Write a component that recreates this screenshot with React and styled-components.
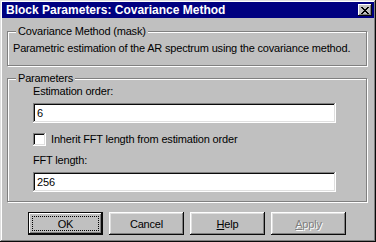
import styled, { createGlobalStyle } from "styled-components";

const GlobalStyle = createGlobalStyle`
  html, body {
    margin: 0;
    padding: 0;
    background: #c0c0c0;
  }
  body {
    font-family: "Liberation Sans", Arial, sans-serif;
    font-size: 11px;
    letter-spacing: -0.18px;
    color: #000;
  }
`;

const Window = styled.div`
  width: 376px;
  height: 242px;
  box-sizing: border-box;
  padding: 2px;
  background: #c0c0c0;
  display: flex;
  flex-direction: column;
  box-shadow: inset -1px -1px #0a0a0a, inset 1px 1px #dfdfdf,
    inset -2px -2px #808080, inset 2px 2px #fff;
`;

const TitleBar = styled.div`
  height: 16px;
  background: #000080;
  color: #fff;
  display: flex;
  align-items: center;
  justify-content: space-between;
  padding: 0 2px 0 4px;
`;

const Title = styled.span`
  font-weight: bold;
  font-size: 12px;
  letter-spacing: 0;
`;

const CloseButton = styled.button`
  width: 14px;
  height: 12px;
  padding: 0;
  border: 0;
  background: #c0c0c0;
  display: flex;
  align-items: center;
  justify-content: center;
  box-shadow: inset -1px -1px #0a0a0a, inset 1px 1px #fff,
    inset -2px -2px #808080;
`;

const Body = styled.div`
  flex: 1;
  padding: 7px 7px 0 5px;
  display: flex;
  flex-direction: column;
`;

const GroupBox = styled.fieldset`
  margin: 0 0 ${(p) => p.$gap || 0}px;
  padding: 0;
  border: 1px solid #808080;
  box-shadow: inset 1px 1px #fff, 1px 1px #fff;
  min-width: 0;
`;

const Legend = styled.legend`
  margin-left: 8px;
  padding: 0 2px;
  line-height: 13px;
  background: #c0c0c0;
`;

const GroupContent = styled.div`
  display: flex;
  flex-direction: column;
  padding: ${(p) => p.$pad};
`;

const Text = styled.div`
  line-height: 13px;
  white-space: nowrap;
`;

const Field = styled.div`
  width: 303px;
  height: 20px;
  box-sizing: border-box;
  margin: 5px 0 0;
  padding: 3px 4px;
  background: #fff;
  line-height: 14px;
  box-shadow: inset -1px -1px #fff, inset 1px 1px #808080,
    inset -2px -2px #dfdfdf, inset 2px 2px #0a0a0a;
`;

const CheckRow = styled.label`
  display: flex;
  align-items: center;
  gap: 5px;
  margin: 10px 0 8px;
  line-height: 13px;
`;

const CheckBox = styled.span`
  width: 13px;
  height: 13px;
  background: #fff;
  box-shadow: inset -1px -1px #fff, inset 1px 1px #808080,
    inset -2px -2px #dfdfdf, inset 2px 2px #0a0a0a;
`;

const ButtonRow = styled.div`
  display: flex;
  gap: 6px;
  margin-top: 10px;
  padding-left: 21px;
`;

const Button = styled.button`
  width: 75px;
  height: 23px;
  padding: 4px;
  border: 0;
  background: #c0c0c0;
  font-family: inherit;
  font-size: 11px;
  letter-spacing: inherit;
  color: ${(p) => (p.disabled ? "#808080" : "#000")};
  text-shadow: ${(p) => (p.disabled ? "1px 1px 0 #fff" : "none")};
  display: flex;
  box-shadow: ${(p) =>
    p.$default
      ? "inset -1px -1px #0a0a0a, inset 1px 1px #0a0a0a, inset -2px -2px #0a0a0a, inset 2px 2px #fff, inset -3px -3px #808080"
      : "inset -1px -1px #0a0a0a, inset 1px 1px #fff, inset -2px -2px #808080, inset 2px 2px #dfdfdf"};
`;

const ButtonLabel = styled.span`
  flex: 1;
  display: flex;
  align-items: center;
  justify-content: center;
  border: 1px dotted ${(p) => (p.$focused ? "#000" : "transparent")};
  u {
    text-decoration: underline;
  }
`;

function CloseGlyph() {
  const rows = [
    [0, 1, 6, 7],
    [1, 2, 5, 6],
    [2, 3, 4, 5],
    [3, 4],
    [2, 3, 4, 5],
    [1, 2, 5, 6],
    [0, 1, 6, 7],
  ];
  return (
    <svg width="8" height="7" viewBox="0 0 8 7" shapeRendering="crispEdges">
      {rows.map((cols, y) =>
        cols.map((x) => <rect key={`${x}-${y}`} x={x} y={y} width="1" height="1" fill="#000" />)
      )}
    </svg>
  );
}

export default function App() {
  return (
    <>
      <GlobalStyle />
      <Window>
        <TitleBar>
          <Title>Block Parameters: Covariance Method</Title>
          <CloseButton>
            <CloseGlyph />
          </CloseButton>
        </TitleBar>
        <Body>
          <GroupBox $gap={6}>
            <Legend>Covariance Method (mask)</Legend>
            <GroupContent $pad="4px 5px 10px">
              <Text>Parametric estimation of the AR spectrum using the covariance method.</Text>
            </GroupContent>
          </GroupBox>
          <GroupBox>
            <Legend>Parameters</Legend>
            <GroupContent $pad="0 5px 9px 25px">
              <Text>Estimation order:</Text>
              <Field>6</Field>
              <CheckRow>
                <CheckBox />
                Inherit FFT length from estimation order
              </CheckRow>
              <Text>FFT length:</Text>
              <Field>256</Field>
            </GroupContent>
          </GroupBox>
          <ButtonRow>
            <Button $default>
              <ButtonLabel $focused>OK</ButtonLabel>
            </Button>
            <Button>
              <ButtonLabel>Cancel</ButtonLabel>
            </Button>
            <Button>
              <ButtonLabel>
                <u>H</u>elp
              </ButtonLabel>
            </Button>
            <Button disabled>
              <ButtonLabel>
                <u>A</u>pply
              </ButtonLabel>
            </Button>
          </ButtonRow>
        </Body>
      </Window>
    </>
  );
}
